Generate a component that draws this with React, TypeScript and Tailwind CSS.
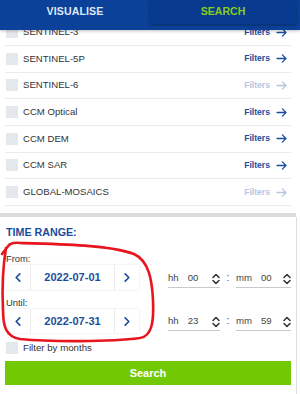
import React from 'react';

const datasets = [
  { name: 'SENTINEL-3', enabled: true },
  { name: 'SENTINEL-5P', enabled: true },
  { name: 'SENTINEL-6', enabled: false },
  { name: 'CCM Optical', enabled: true },
  { name: 'CCM DEM', enabled: true },
  { name: 'CCM SAR', enabled: true },
  { name: 'GLOBAL-MOSAICS', enabled: false },
];

function ArrowRight({ className }: { className?: string }) {
  return (
    <svg viewBox="0 0 12 10" className={className} fill="none" stroke="currentColor" strokeWidth="1.4" strokeLinecap="round" strokeLinejoin="round">
      <path d="M1 5h10M7 1l4 4-4 4" />
    </svg>
  );
}

function Chevron({ dir }: { dir: 'left' | 'right' }) {
  return (
    <svg viewBox="0 0 6 10" className="w-[6px] h-[9px]" fill="none" stroke="currentColor" strokeWidth="1.8" strokeLinecap="round" strokeLinejoin="round">
      <path d={dir === 'left' ? 'M5 1L1 5l4 4' : 'M1 1l4 4-4 4'} />
    </svg>
  );
}

function Spinner() {
  return (
    <svg viewBox="0 0 8 12" className="w-[8px] h-[12px]" fill="none" stroke="#333" strokeWidth="1.5" strokeLinecap="round" strokeLinejoin="round">
      <path d="M1 4.5L4 1.5l3 3M1 7.5l3 3 3-3" />
    </svg>
  );
}

function DatePicker({ value }: { value: string }) {
  return (
    <div className="flex w-[134px] bg-white shadow-[0_0_2px_rgba(0,0,0,0.12)]">
      <div className="w-[26px] flex items-center justify-center text-[#1a4d9c] border-r border-[#ececec]">
        <Chevron dir="left" />
      </div>
      <div className="flex-1 flex items-center justify-center text-[11px] font-bold text-[#1a4d9c]">{value}</div>
      <div className="w-[25px] flex items-center justify-center text-[#1a4d9c] border-l border-[#ececec]">
        <Chevron dir="right" />
      </div>
    </div>
  );
}

function TimeField({ label, value, width }: { label: string; value: string; width: string }) {
  return (
    <div className={`${width} h-[18px] flex items-center border-b border-[#c9c9c9] text-[9.6px] text-[#444]`}>
      <span>{label}</span>
      <span className="ml-[9px] flex-1">{value}</span>
      <Spinner />
    </div>
  );
}

function TimeRow({ date, hh, mm, height }: { date: string; hh: string; mm: string; height: string }) {
  return (
    <div className={`flex ${height}`}>
      <DatePicker value={date} />
      <div className="flex items-end pb-[2px] ml-[29px]">
        <TimeField label="hh" value={hh} width="w-[52px]" />
        <span className="w-[16px] text-center text-[10px] text-[#444] mb-[3px]">:</span>
        <TimeField label="mm" value={mm} width="w-[55px]" />
      </div>
    </div>
  );
}

export default function App() {
  return (
    <div className="relative w-[300px] h-[394px] overflow-hidden bg-white" style={{ fontFamily: '"Liberation Sans", Arial, sans-serif' }}>
      {/* tabs */}
      <div className="relative z-10 h-[30px] bg-[#0b4199] flex shadow-[0_1px_3px_rgba(0,0,0,0.25)]">
        <div className="w-[150px] h-[24px] flex items-center justify-center text-[10.6px] font-bold text-[#dfe8f6] tracking-[0.1px]">VISUALISE</div>
        <div className="w-[146px] h-[24px] flex items-center justify-center bg-[#083b8f] text-[10.6px] font-bold text-[#86cc1a] shadow-[0_1px_3px_rgba(0,0,0,0.35)]">SEARCH</div>
      </div>

      {/* dataset list */}
      <div className="w-[296px] h-[183px] overflow-hidden px-[5px]">
        <div className="-mt-[10.67px]">
          {datasets.map((d) => (
            <div key={d.name} className="h-[26.67px] flex items-center border-b border-[#ebebeb]">
              <span className="w-[12px] h-[12px] bg-[#e4e7ec] mr-[5px] ml-[1px]" />
              <span className="flex-1 text-[9.6px] text-[#333]">{d.name}</span>
              <span className={`text-[8.6px] font-bold ${d.enabled ? 'text-[#1a4d9c]' : 'text-[#b6c6df]'}`}>Filters</span>
              <ArrowRight className={`w-[11px] h-[9px] ml-[6px] mr-[4px] ${d.enabled ? 'text-[#1a4d9c]' : 'text-[#b6c6df]'}`} />
            </div>
          ))}
        </div>
      </div>

      <div className="w-[296px] h-[4px] bg-[#dcdcdc]" />

      {/* time range */}
      <div className="w-[297px] h-[177px] border-r border-[#dedede] px-[5px] pt-[8px]">
        <div className="h-[14px] flex items-center ml-[1px] text-[10.7px] font-bold text-[#1a4d9c]">TIME RANGE:</div>
        <div className="mt-[14px] h-[12px] flex items-center ml-[1px] text-[9.4px] text-[#333]">From:</div>
        <TimeRow date="2022-07-01" hh="00" mm="00" height="h-[25px]" />
        <div className="mt-[7px] h-[12px] flex items-center ml-[1px] text-[9.4px] text-[#333]">Until:</div>
        <TimeRow date="2022-07-31" hh="23" mm="59" height="h-[24px]" />
        <div className="mt-[9px] h-[12px] flex items-center">
          <span className="w-[12px] h-[12px] bg-[#e4e7ec] ml-[1px] mr-[5px]" />
          <span className="text-[9.7px] text-[#333]">Filter by months</span>
        </div>
        <button className="mt-[7px] w-[286px] h-[24px] bg-[#73c804] text-white text-[11px] font-bold flex items-center justify-center">Search</button>
      </div>

      {/* hand-drawn annotation */}
      <svg className="absolute left-0 top-0 pointer-events-none" width="300" height="394" viewBox="0 0 300 394" fill="none">
        <path
          d="M2 254 L9 245 Q12 242 20 243 C60 244 110 245 134 254 C149 261 152 280 153 300 C154 322 152 336 140 338 C110 342 50 342 20 339 C6 337 3 326 3 310 C2 290 3 266 6 248"
          stroke="#e8141e"
          strokeWidth="2.6"
          strokeLinecap="round"
          strokeLinejoin="round"
        />
      </svg>
    </div>
  );
}
